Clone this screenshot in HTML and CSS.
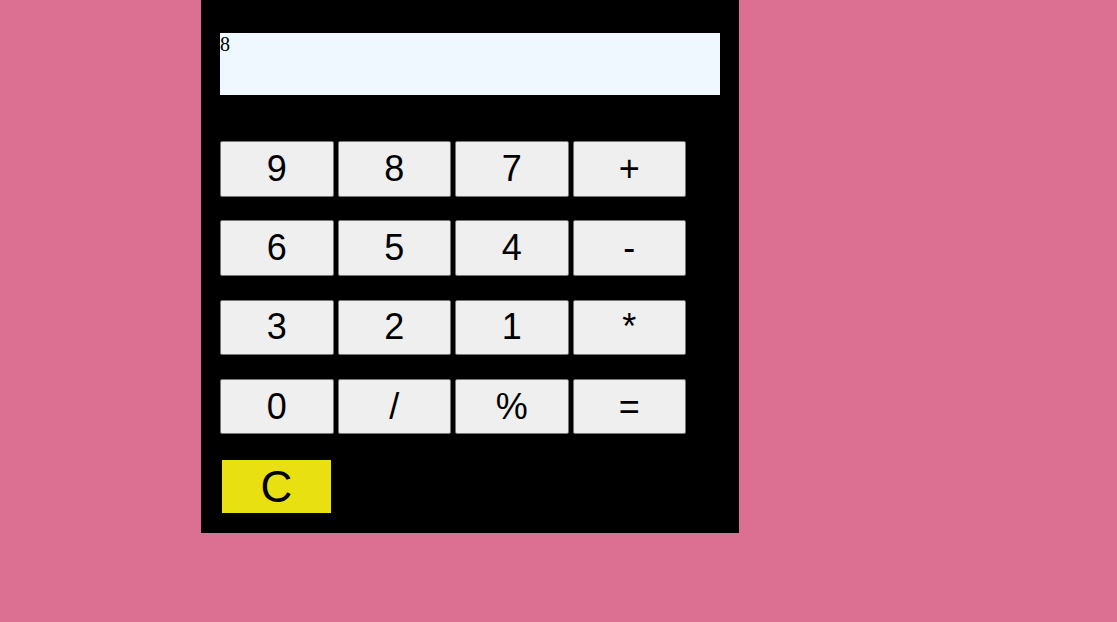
FILE: index.html
```html
<!DOCTYPE html>
<html>
<head>
<meta charset="utf-8">
<link rel="stylesheet" href="styles.css">
</head>
<body>
<div class="calc">
  <div class="display">8</div>
  <div class="keys">
    <div class="row">
      <button class="key">9</button><button class="key">8</button><button class="key">7</button><button class="key">+</button>
    </div>
    <div class="row">
      <button class="key">6</button><button class="key">5</button><button class="key">4</button><button class="key">-</button>
    </div>
    <div class="row">
      <button class="key">3</button><button class="key">2</button><button class="key">1</button><button class="key">*</button>
    </div>
    <div class="row">
      <button class="key">0</button><button class="key">/</button><button class="key">%</button><button class="key">=</button>
    </div>
  </div>
  <button class="clear">C</button>
</div>
</body>
</html>
```
FILE: styles.css
```css
html, body {
  margin: 0;
  padding: 0;
}
body {
  background: #db7093;
  height: 622px;
  font-family: "Liberation Serif", serif;
}
.calc {
  width: 500px;
  margin-left: 201px;
  background: #000;
  padding: 33px 19px 20px;
  display: flex;
  flex-direction: column;
}
.display {
  height: 62px;
  background: #f0f8ff;
  font-family: "Liberation Serif", serif;
  font-size: 20px;
  line-height: 22px;
  color: #000;
}
.keys {
  margin-top: 46px;
  display: flex;
  flex-direction: column;
  gap: 23.75px;
}
.row {
  display: flex;
  gap: 4px;
}
.key {
  width: 113.5px;
  height: 55.5px;
  margin: 0;
  padding: 0;
  background: #efefef;
  border: 1px solid #767676;
  border-radius: 2px;
  font-family: "Liberation Sans", Arial, sans-serif;
  font-size: 36px;
  color: #000;
}
.clear {
  margin: 25.75px 0 0 2px;
  width: 109px;
  height: 53px;
  padding: 0;
  border: none;
  background: #e8e010;
  font-family: "Liberation Sans", Arial, sans-serif;
  font-size: 44px;
  color: #000;
}
```
